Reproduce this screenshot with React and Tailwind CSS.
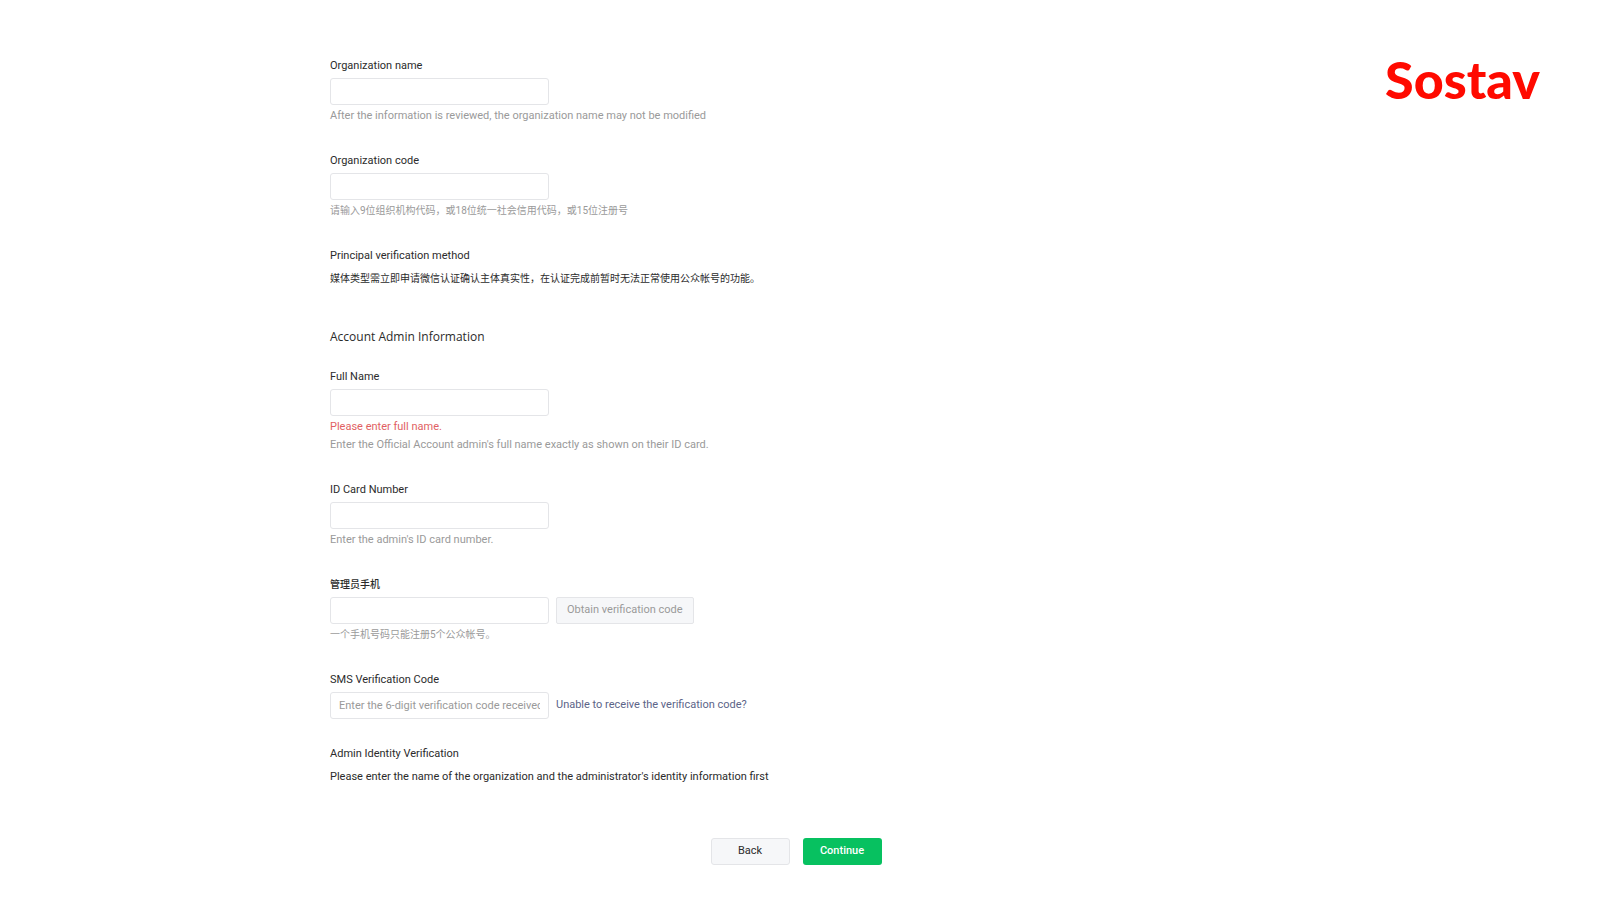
import React from "react";

const inputClass =
  "w-[219px] h-[27px] px-2 rounded-[3px] border border-[#e4e5e8] bg-white text-[11px] text-[#353535] placeholder:text-[#9a9a9a] outline-none focus:border-[#07c160]";

function Label({ htmlFor, children }) {
  return (
    <label htmlFor={htmlFor} className="block w-fit leading-4">
      {children}
    </label>
  );
}

function Field({ id, label, type = "text", placeholder, error, hint, children }) {
  const [value, setValue] = React.useState("");

  return (
    <div>
      <Label htmlFor={id}>{label}</Label>
      <div className="mt-1 flex flex-wrap items-center gap-[7px]">
        <input
          id={id}
          type={type}
          value={value}
          placeholder={placeholder}
          onChange={(e) => setValue(e.target.value)}
          className={inputClass}
        />
        {children}
      </div>
      {(error || hint) && (
        <div className="mt-0.5 leading-[18px]">
          {error && <p className="text-[#e15f63]">{error}</p>}
          {hint && <p className="text-[#9a9a9a]">{hint}</p>}
        </div>
      )}
    </div>
  );
}

export default function App() {
  const handleSubmit = (e) => {
    e.preventDefault();
  };

  return (
    <div className="min-h-screen bg-white text-[#2b2b2b] font-['Roboto','Noto_Sans_CJK_SC',sans-serif] text-[11px] grid grid-cols-[1fr_minmax(0,940px)_1fr]">
      <form
        onSubmit={handleSubmit}
        className="col-start-2 pt-[58px] pb-8"
      >
        {/* Organization */}
        <section className="flex flex-col gap-7">
          <Field
            id="org-name"
            label="Organization name"
            hint="After the information is reviewed, the organization name may not be modified"
          />
          <Field
            id="org-code"
            label="Organization code"
            hint={
              <span className="text-[10px]">
                请输入9位组织机构代码，或18位统一社会信用代码，或15位注册号
              </span>
            }
          />
          <div>
            <h3 className="leading-4">Principal verification method</h3>
            <p className="mt-[6px] text-[10px] leading-[18px]">
              媒体类型需立即申请微信认证确认主体真实性，在认证完成前暂时无法正常使用公众帐号的功能。
            </p>
          </div>
        </section>

        {/* Account admin */}
        <h2 className="mt-[39px] font-['Open_Sans',sans-serif] text-[12px] leading-5">
          Account Admin Information
        </h2>

        <section className="mt-[22px] flex flex-col gap-7">
          <Field
            id="full-name"
            label="Full Name"
            error="Please enter full name."
            hint="Enter the Official Account admin's full name exactly as shown on their ID card."
          />
          <Field
            id="id-card"
            label="ID Card Number"
            hint="Enter the admin's ID card number."
          />
          <Field
            id="admin-phone"
            type="tel"
            label={<span className="text-[10px] font-medium">管理员手机</span>}
            hint={
              <span className="text-[10px]">一个手机号码只能注册5个公众帐号。</span>
            }
          >
            <button
              type="button"
              className="h-[27px] px-[10px] rounded-[2px] border border-[#e4e5e8] bg-[#f6f7f9] text-[#9a9a9a]"
            >
              Obtain verification code
            </button>
          </Field>
          <Field
            id="sms-code"
            label="SMS Verification Code"
            placeholder="Enter the 6-digit verification code received"
          >
            <a href="#help" className="text-[#5c6488]">
              Unable to receive the verification code?
            </a>
          </Field>
        </section>

        <section className="mt-[27px]">
          <h3 className="leading-4">Admin Identity Verification</h3>
          <p className="mt-[6px] leading-[18px]">
            Please enter the name of the organization and the administrator's
            identity information first
          </p>
        </section>

        <div className="mt-[52px] pr-2 flex justify-center gap-[13px]">
          <button
            type="button"
            className="w-[79px] h-[27px] rounded-[3px] border border-[#e4e5e8] bg-[#f6f7f9]"
          >
            Back
          </button>
          <button
            type="submit"
            className="w-[79px] h-[27px] rounded-[3px] bg-[#07c160] font-medium text-white"
          >
            Continue
          </button>
        </div>
      </form>

      <div className="pt-12 pr-[60px] text-right">
        <a
          href="#home"
          className="font-['Lato',sans-serif] text-[52px] leading-[62px] font-black text-[#ff0a00]"
        >
          Sostav
        </a>
      </div>
    </div>
  );
}
